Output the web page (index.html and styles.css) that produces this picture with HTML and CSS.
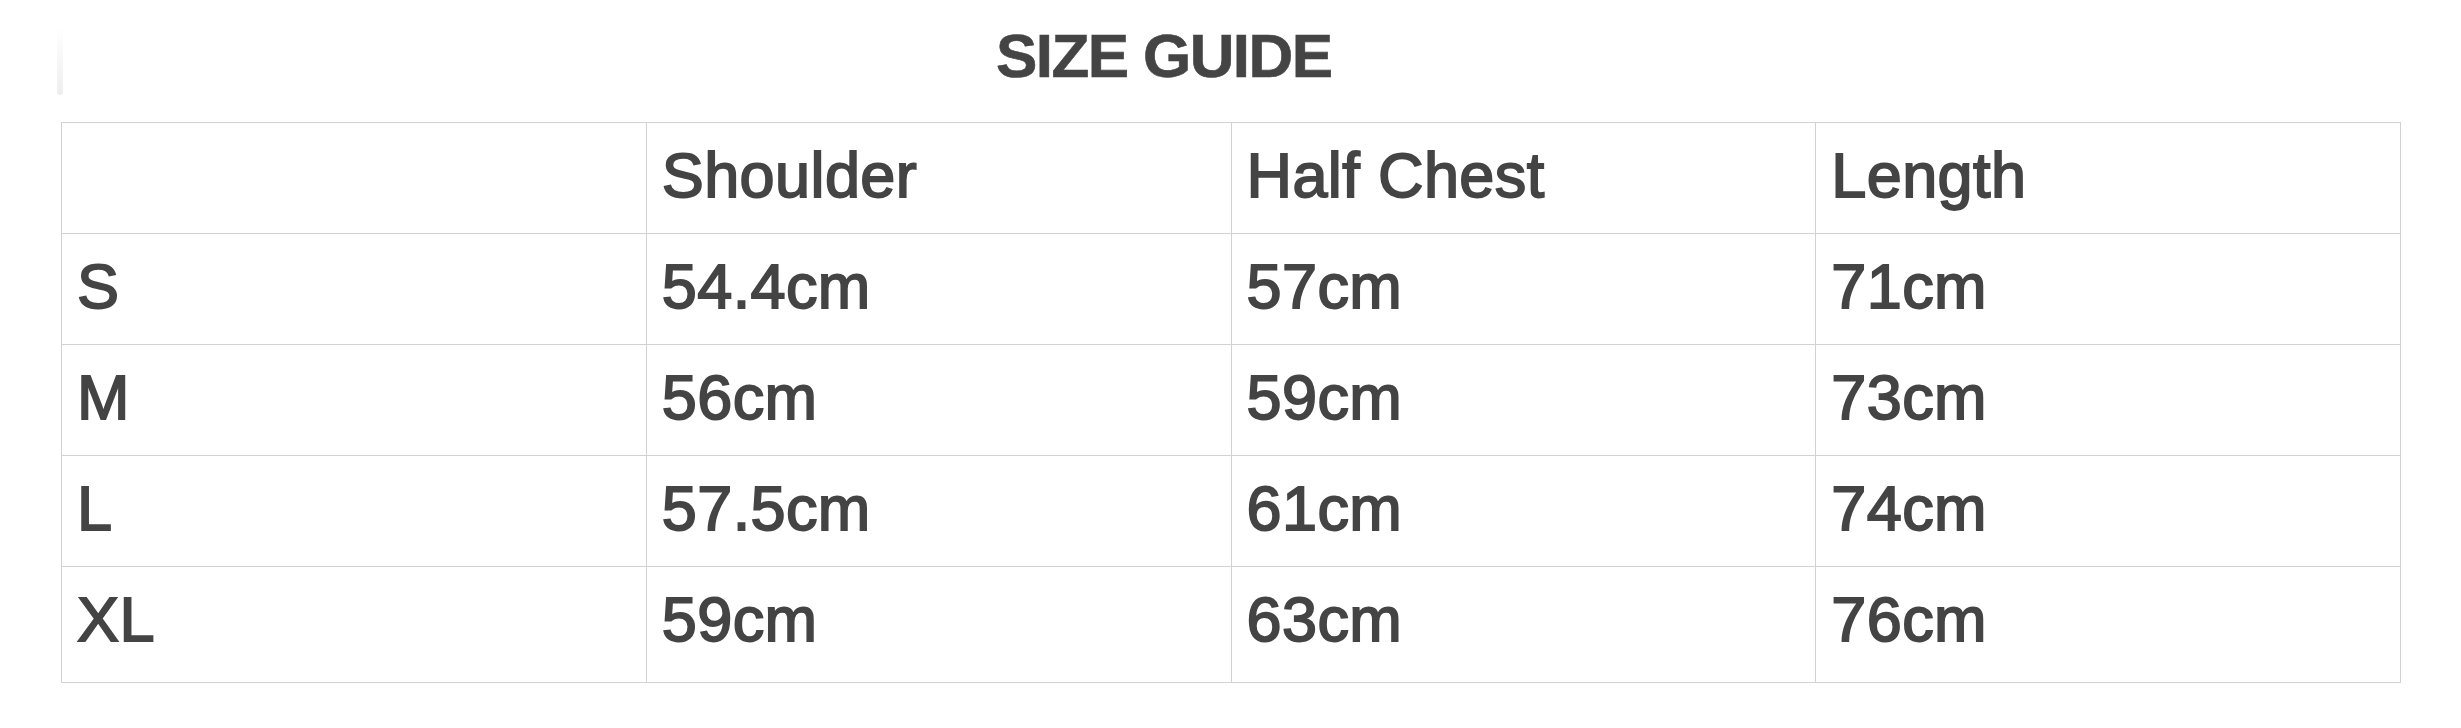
FILE: index.html
```html
<!DOCTYPE html>
<html>
<head>
<meta charset="utf-8">
<link rel="stylesheet" href="styles.css">
</head>
<body>
<div class="page">
  <div class="head">
    <div class="bar"></div>
    <h1 class="title">SIZE GUIDE</h1>
  </div>
  <table class="guide">
    <tr><td></td><td>Shoulder</td><td>Half Chest</td><td>Length</td></tr>
    <tr><td>S</td><td>54.4cm</td><td>57cm</td><td>71cm</td></tr>
    <tr><td>M</td><td>56cm</td><td>59cm</td><td>73cm</td></tr>
    <tr><td>L</td><td>57.5cm</td><td>61cm</td><td>74cm</td></tr>
    <tr class="last"><td>XL</td><td>59cm</td><td>63cm</td><td>76cm</td></tr>
  </table>
</div>
</body>
</html>
```
FILE: styles.css
```css
html, body {
  margin: 0;
  padding: 0;
  background: #ffffff;
}
.page {
  padding: 0 60px 0 61px;
  font-family: "Liberation Sans", Arial, sans-serif;
  color: #444444;
}
.head {
  display: flex;
  align-items: flex-start;
  height: 122px;
  margin-left: -4px;
}
.bar {
  width: 6px;
  height: 68px;
  margin-top: 27px;
  border-radius: 0 0 3px 3px;
  background: linear-gradient(to bottom, #ffffff, #eeeeee);
}
.title {
  margin: 20px 0 0 933px;
  font-size: 62px;
  line-height: 71px;
  font-weight: 700;
  letter-spacing: -1.6px;
  color: #444444;
  -webkit-text-stroke: 0.6px #444444;
}
.guide {
  width: 2340px;
  border-collapse: collapse;
  table-layout: fixed;
}
.guide td {
  border: 1px solid #d2d2d2;
  padding: 17px 14px 22px 15px;
  font-size: 63px;
  line-height: 71px;
  height: 71px;
  vertical-align: top;
  white-space: nowrap;
  letter-spacing: 0.4px;
  -webkit-text-stroke: 1.8px #444444;
}
.guide tr.last td {
  padding-bottom: 27px;
}
```
